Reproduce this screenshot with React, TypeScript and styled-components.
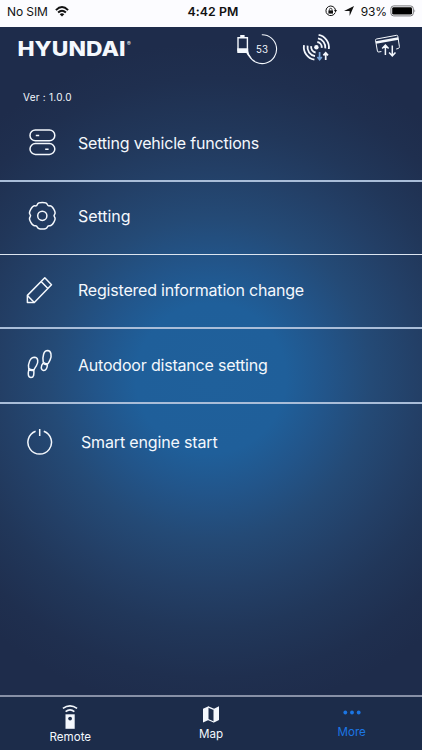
import type { ReactNode } from "react";
import styled, { ThemeProvider, createGlobalStyle } from "styled-components";

const theme = {
	colors: {
		navy: "#1e2c4b",
		bar: "#1c2c4a",
		white: "#f4f8fd",
		active: "#1b76e4",
	},
};

const GlobalStyle = createGlobalStyle`
	* {
		box-sizing: border-box;
	}

	body {
		margin: 0;
		font-family: Inter, "Liberation Sans", sans-serif;
	}

	svg {
		display: block;
		flex: none;
	}
`;

const Screen = styled.div`
	width: 422px;
	height: 750px;
	display: flex;
	flex-direction: column;
	overflow: hidden;
	color: ${(props) => props.theme.colors.white};
	background: ${(props) => props.theme.colors.navy};
`;

const StatusBar = styled.div`
	height: 27px;
	flex: none;
	display: grid;
	grid-template-columns: 1fr auto 1fr;
	align-items: center;
	padding: 0 5px 5px 7px;
	color: #111;
	background: #fcfcff;
	font-size: 12px;
`;

const StatusGroup = styled.div<{ $end?: boolean }>`
	display: flex;
	align-items: center;
	justify-content: ${(props) => (props.$end ? "flex-end" : "flex-start")};
	gap: 7px;
	letter-spacing: -0.1px;
`;

const Clock = styled.div`
	padding-left: 2px;
	font-size: 12.3px;
	font-weight: 600;
	letter-spacing: 0.1px;
`;

const Charge = styled.div`
	display: flex;
	align-items: center;
	gap: 3px;
`;

const Content = styled.main`
	flex: 1;
	display: flex;
	flex-direction: column;
	background: radial-gradient(
		circle at 211px 351px,
		#1f609b 0,
		#1f5f9a 75px,
		#22558a 115px,
		#244a76 160px,
		#233f66 210px,
		#21375a 250px,
		#1f2f4f 300px,
		${(props) => props.theme.colors.navy} 335px
	);
`;

const Header = styled.header`
	height: 48px;
	flex: none;
	display: flex;
	align-items: flex-start;
	padding: 3px 20px 0 17px;
`;

const Brand = styled.div`
	width: 119px;
	margin-right: 98px;
	padding-top: 8px;
`;

const HeaderIcon = styled.div<{ $gap?: number }>`
	margin-right: ${(props) => props.$gap || 0}px;
`;

const Version = styled.div`
	height: 32px;
	flex: none;
	padding: 15px 0 0 23px;
	font-size: 10px;
	line-height: 14px;
	letter-spacing: 0.25px;
`;

const Row = styled.div<{
	$height: number;
	$line?: number;
	$inset?: number;
	$lift?: number;
}>`
	height: ${(props) => props.$height}px;
	flex: none;
	display: flex;
	align-items: center;
	gap: ${(props) => 20 + (props.$inset || 0)}px;
	padding-left: 26px;
	padding-bottom: ${(props) => props.$lift || 0}px;
	border-bottom: ${(props) => props.$line || 0}px solid
		${(props) => (props.$line === 1 ? "#dce5f0" : "#a9bdd8")};
`;

const Label = styled.span<{ $tracking?: number; $drop?: number }>`
	padding-top: ${(props) => props.$drop ?? 1}px;
	font-size: 16px;
	letter-spacing: ${(props) => props.$tracking ?? -0.2}px;
	white-space: nowrap;
`;

const TabBar = styled.nav`
	height: 55px;
	flex: none;
	display: grid;
	grid-template-columns: repeat(3, 1fr);
	border-top: 2px solid #8790a6;
	background: ${(props) => props.theme.colors.bar};
`;

const Tab = styled.div<{ $active?: boolean; $top: number; $gap?: number }>`
	display: flex;
	flex-direction: column;
	align-items: center;
	gap: ${(props) => props.$gap || 0}px;
	padding-top: ${(props) => props.$top}px;
	font-size: 11.6px;
	line-height: 16px;
	color: ${(props) =>
		props.$active ? props.theme.colors.active : props.theme.colors.white};
`;

function LineIcon({ children }: { children: ReactNode }) {
	return (
		<svg
			width="32"
			height="32"
			viewBox="0 0 32 32"
			fill="none"
			stroke="currentColor"
			strokeWidth="1.5"
			strokeLinejoin="round"
		>
			{children}
		</svg>
	);
}

// six soft teeth, smoothed through the midpoints of the corner polygon
function gearPath(cx: number, cy: number) {
	const points: number[][] = [];
	for (let i = 0; i < 6; i++) {
		for (const [offset, radius] of [
			[-18, 13.9],
			[18, 13.9],
			[30, 11.1],
		]) {
			const angle = ((i * 60 + offset - 90) * Math.PI) / 180;
			points.push([cx + radius * Math.cos(angle), cy + radius * Math.sin(angle)]);
		}
	}
	const mid = (a: number[], b: number[]) =>
		`${((a[0] + b[0]) / 2).toFixed(2)} ${((a[1] + b[1]) / 2).toFixed(2)}`;
	const start = mid(points[points.length - 1], points[0]);
	const curves = points.map(
		(p, i) =>
			`Q${p[0].toFixed(2)} ${p[1].toFixed(2)} ${mid(p, points[(i + 1) % points.length])}`
	);
	return `M${start}${curves.join("")}Z`;
}

function TogglesIcon() {
	return (
		<LineIcon>
			<rect x="4" y="4" width="24.8" height="10.8" rx="5.4" />
			<rect x="4" y="17.6" width="24.8" height="10.8" rx="5.4" />
			<path d="M9.8 9.5h3.4M19.2 23.2h3.4" />
		</LineIcon>
	);
}

function GearIcon() {
	return (
		<LineIcon>
			<path d={gearPath(16.3, 15.8)} />
			<circle cx="16.3" cy="15.8" r="4.6" />
		</LineIcon>
	);
}

function PencilIcon() {
	return (
		<LineIcon>
			<path d="M1.4 28.6V21.4L18.8 3.8L25.5 10.7L8.3 28.6Z" />
			<path d="M1.4 21.4L8.3 28.6M15.1 7.4L21.9 14.4" />
		</LineIcon>
	);
}

function FootstepsIcon() {
	return (
		<LineIcon>
			<path d="M2.7 20.4C1.8 15.4 4.2 9.3 8.5 9.3C12.4 9.4 12.6 14.4 10.3 17.8C9.2 19.5 8.6 20.4 8.1 21.6Q5.2 22.4 2.7 20.4Z" />
			<path d="M2.8 21.6Q5.2 22.8 7.8 22.2C8.2 26.4 7.8 29.6 5 29.6C1.9 29.6 1.9 25.8 2.8 21.6Z" />
			<path d="M17.2 14C16.4 8.6 17.6 2.6 21.6 2.6C25.5 2.7 25.8 8 24.2 11.6C23.5 13.2 22.8 14.4 22 15.6Q19.4 16.2 17.2 14Z" />
			<path d="M17 15.2Q19 17 21.4 16.8C21.4 20 19.8 22.6 17.6 22.4C14.6 22 14.6 18 17 15.2Z" />
		</LineIcon>
	);
}

function PowerIcon() {
	return (
		<LineIcon>
			<path d="M9.6 5.2A11.8 11.8 0 1 0 17.8 5.2M13.7 3V10" />
		</LineIcon>
	);
}

function Logo() {
	return (
		<svg width="119" height="24" viewBox="0 0 119 24" fill="currentColor" overflow="visible">
			<text
				x="0.5"
				y="18"
				fontFamily="Inter, sans-serif"
				fontSize="20"
				fontWeight="800"
				textLength="108"
				lengthAdjust="spacingAndGlyphs"
			>
				HYUNDAI
			</text>
			<text x="110" y="7.5" fontFamily="Inter, sans-serif" fontSize="5.5">
				®
			</text>
		</svg>
	);
}

function BatteryGauge() {
	return (
		<svg width="44" height="38" viewBox="234 30 44 38" fill="none" stroke="currentColor">
			<path d="M240.2 35H244.6V37.4H240.2Z" fill="currentColor" stroke="none" />
			<path d="M238 51.5V37.7H247.4V50" strokeWidth="1.4" />
			<path
				d="M237.3 48.2H248.1C248.2 52.4 249.4 55.8 251.8 59.6C248.8 57 247.2 54.8 246.4 53H237.3Z"
				fill="currentColor"
				stroke="none"
			/>
			<path d="M261.8 34.8A14.4 14.4 0 1 1 249 55" strokeWidth="1.1" />
			<text
				x="262"
				y="53.2"
				textAnchor="middle"
				fontFamily="Inter, sans-serif"
				fontSize="9.7"
				fill="currentColor"
				stroke="none"
			>
				53
			</text>
		</svg>
	);
}

function SignalIcon() {
	return (
		<svg width="30" height="34" viewBox="302 30 30 34" fill="none" stroke="currentColor">
			<circle cx="316.4" cy="47.2" r="2.2" fill="currentColor" stroke="none" />
			<g strokeWidth="1.8">
				<path d="M317.3 42A5.4 5.4 0 0 1 321.7 47.8M318 38.4A9 9 0 0 1 325.3 48.4M318.6 34.9A12.6 12.6 0 0 1 328.8 49" />
				<path d="M311.2 46.2A5.4 5.4 0 0 0 315.6 52.5M307.6 45.7A9 9 0 0 0 315 56.1M304 45.1A12.6 12.6 0 0 0 314.4 59.6" />
			</g>
			<path d="M319.6 52V59.6M317.4 57L319.6 59.6L321.8 57" stroke="#78a5da" strokeWidth="1.7" />
			<path d="M325.7 60V53M323.4 55.4L325.7 52.8L328 55.4" strokeWidth="1.7" />
		</svg>
	);
}

function CardIcon() {
	return (
		<svg width="30" height="30" viewBox="372 32 30 30" fill="none" stroke="currentColor">
			<path d="M381.4 53.5L378.8 54Q377.6 54.2 377.4 53L375.5 42.3Q375.4 41.2 376.5 41L396.5 37.3Q397.6 37.1 397.8 38.2L399.4 48.6Q399.5 50 398.4 50.4L396.2 51" />
			<path d="M376 44.6L398.3 40.5" strokeWidth="2.5" />
			<path
				d="M385.4 57V47.4M382.2 50.6L385.4 47.2L388.6 50.6M392.3 47.4V57.6M389.1 54.4L392.3 57.8L395.5 54.4"
				strokeWidth="1.5"
			/>
		</svg>
	);
}

function WifiIcon() {
	return (
		<svg width="14" height="11" viewBox="0 0 14 11" fill="none" stroke="currentColor">
			<path d="M0.9 4.1Q7 -1.9 13.1 4.1M3.1 6.5Q7 2.8 10.9 6.5" strokeWidth="1.9" />
			<path d="M7 10.6L4.7 8.2Q7 6.3 9.3 8.2Z" fill="currentColor" stroke="none" />
		</svg>
	);
}

function RotationLockIcon() {
	return (
		<svg width="12" height="12" viewBox="0 0 12 12" fill="none" stroke="currentColor">
			<path d="M10.2 7.6A4.8 4.8 0 1 1 10.5 5.2" />
			<path d="M9 5H12L10.5 7.4Z" fill="currentColor" stroke="none" />
			<path d="M3.4 5.4H8V8.6H3.4Z" fill="currentColor" stroke="none" />
			<path d="M4.4 5.6V4.6A1.3 1.3 0 0 1 7 4.6V5.6" strokeWidth="0.8" />
		</svg>
	);
}

function LocationIcon() {
	return (
		<svg width="10" height="10" viewBox="0 0 10 10" fill="currentColor">
			<path d="M10 0L5.6 10V5H0Z" />
		</svg>
	);
}

function PhoneBatteryIcon() {
	return (
		<svg width="27" height="12" viewBox="0 0 27 12" fill="none">
			<rect x="0.9" y="0.9" width="22.4" height="10" rx="2.8" stroke="#77777b" />
			<rect x="2.2" y="2.2" width="19.8" height="7.4" rx="1.4" fill="#000" />
			<path d="M24.5 4.2Q26 5.9 24.5 7.6Z" fill="#77777b" />
		</svg>
	);
}

function RemoteIcon() {
	return (
		<svg width="16" height="24" viewBox="0 0 16 24" fill="none" stroke="currentColor">
			<path d="M0.9 3.4Q8 -1.6 15.1 3.4M3.6 6.6Q8 3.2 12.4 6.6" strokeWidth="1.6" />
			<path d="M3.5 9.3H12.7V23.8H3.5Z" fill="currentColor" stroke="none" />
			<circle cx="8.1" cy="13.6" r="1.9" fill="#1c2c4a" stroke="none" />
		</svg>
	);
}

function MapIcon() {
	return (
		<svg width="16" height="17" viewBox="0 0 16 17" fill="currentColor">
			<path d="M0 2.7L5.5 0.2V13.9L0 16.6Z" />
			<path d="M10.5 2.9L16 0.2V13.9L10.5 16.7Z" />
			<path d="M5 0.9L10.8 3.4M5 13.5L10.8 16" fill="none" stroke="currentColor" strokeWidth="1.3" />
		</svg>
	);
}

function MoreIcon() {
	return (
		<svg width="18" height="5" viewBox="0 0 18 5" fill="currentColor">
			<circle cx="2.3" cy="2.5" r="1.9" />
			<circle cx="9" cy="2.5" r="1.9" />
			<circle cx="15.7" cy="2.5" r="1.9" />
		</svg>
	);
}

export default function App() {
	return (
		<ThemeProvider theme={theme}>
			<GlobalStyle />
			<Screen>
				<StatusBar>
					<StatusGroup>
						No SIM
						<WifiIcon />
					</StatusGroup>
					<Clock>4:42 PM</Clock>
					<StatusGroup $end>
						<RotationLockIcon />
						<LocationIcon />
						<Charge>
							93%
							<PhoneBatteryIcon />
						</Charge>
					</StatusGroup>
				</StatusBar>
				<Content>
					<Header>
						<Brand>
							<Logo />
						</Brand>
						<HeaderIcon $gap={24}>
							<BatteryGauge />
						</HeaderIcon>
						<HeaderIcon $gap={40}>
							<SignalIcon />
						</HeaderIcon>
						<HeaderIcon>
							<CardIcon />
						</HeaderIcon>
					</Header>
					<Version>Ver : 1.0.0</Version>
					<Row $height={75} $line={2} $lift={3}>
						<TogglesIcon />
						<Label>Setting vehicle functions</Label>
					</Row>
					<Row $height={73} $line={1} $lift={5}>
						<GearIcon />
						<Label $tracking={-0.05}>Setting</Label>
					</Row>
					<Row $height={74} $line={2} $lift={3}>
						<PencilIcon />
						<Label>Registered information change</Label>
					</Row>
					<Row $height={75} $line={2} $lift={3}>
						<FootstepsIcon />
						<Label>Autodoor distance setting</Label>
					</Row>
					<Row $height={76} $inset={3}>
						<PowerIcon />
						<Label $tracking={-0.15} $drop={0}>
							Smart engine start
						</Label>
					</Row>
				</Content>
				<TabBar>
					<Tab $top={8}>
						<RemoteIcon />
						Remote
					</Tab>
					<Tab $top={9} $gap={3}>
						<MapIcon />
						Map
					</Tab>
					<Tab $top={13} $gap={9} $active>
						<MoreIcon />
						More
					</Tab>
				</TabBar>
			</Screen>
		</ThemeProvider>
	);
}
